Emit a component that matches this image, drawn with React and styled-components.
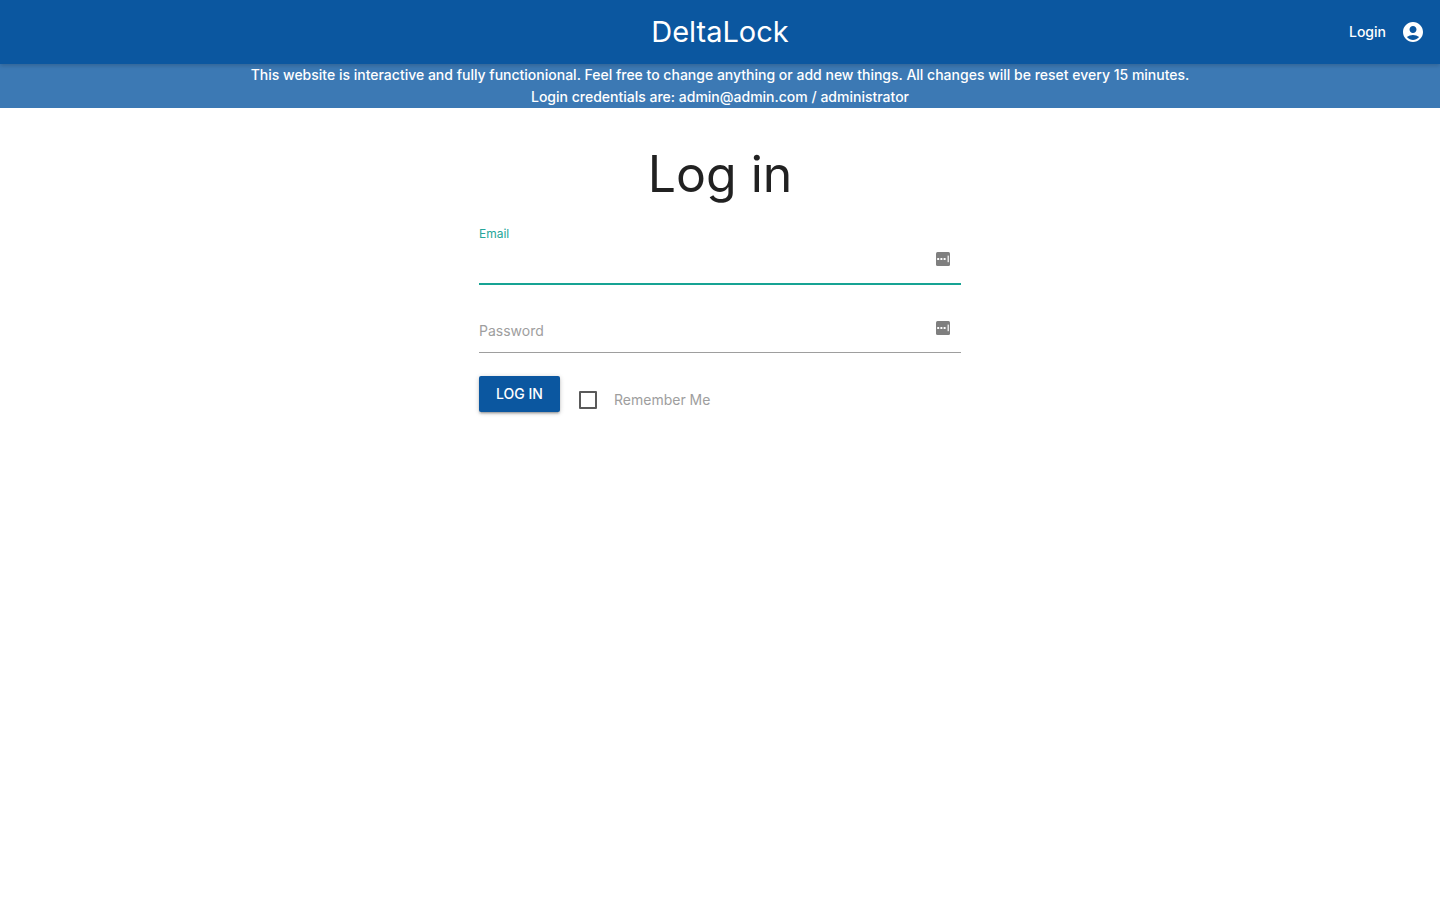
import React from "react";
import styled, { createGlobalStyle } from "styled-components";
import { MdAccountCircle } from "react-icons/md";

const Global = createGlobalStyle`
  *, *::before, *::after { box-sizing: border-box; }
  body {
    margin: 0;
    background: #fff;
    color: rgba(0, 0, 0, 0.87);
    font-family: Inter, "Liberation Sans", sans-serif;
    font-size: 14px;
    line-height: 22px;
  }
`;

const Nav = styled.nav`
  display: grid;
  grid-template-columns: 1fr auto 1fr;
  align-items: center;
  min-height: 64px;
  padding: 0 15px;
  background: #0b57a0;
  color: #fff;
  position: relative;
  box-shadow: 0 2px 4px 0 rgba(0, 0, 0, 0.16);
`;

const Brand = styled.a`
  grid-column: 2;
  color: inherit;
  text-decoration: none;
  font-size: 29px;
  line-height: 64px;
`;

const LoginLink = styled.a`
  grid-column: 3;
  justify-self: end;
  display: flex;
  align-items: center;
  gap: 15px;
  color: inherit;
  text-decoration: none;
  font-weight: 500;
`;

const Notice = styled.div`
  background: #3c79b4;
  color: #fff;
  text-align: center;
  font-weight: 500;
`;

const NoticeLine = styled.p`
  margin: 0;
`;

const Main = styled.main`
  width: 34%;
  min-width: 300px;
  max-width: 482px;
  margin: 0 auto;
  padding-bottom: 24px;
`;

const Title = styled.h1`
  margin: 37px 0 26px;
  font-size: 50px;
  line-height: 58px;
  font-weight: 400;
  text-align: center;
`;

const Form = styled.form`
  display: flex;
  flex-direction: column;
  gap: 23px;
`;

const Field = styled.div`
  display: grid;
  grid-template-rows: ${(p) => (p.$active ? "10px 46px" : "45px")};
`;

const Label = styled.label`
  grid-area: 1 / 1;
  align-self: center;
  justify-self: start;
  color: ${(p) => (p.$active ? "#26a69a" : "#9e9e9e")};
  font-size: ${(p) => (p.$active ? "12px" : "14px")};
  line-height: 14px;
`;

const Input = styled.input`
  grid-area: -2 / 1;
  width: 100%;
  padding: 0 32px 0 0;
  border: 0;
  border-bottom: ${(p) => (p.$active ? "2px solid #16a394" : "1px solid #9e9e9e")};
  outline: none;
  background: transparent;
  color: inherit;
  font: inherit;
`;

const FillIcon = styled.svg`
  grid-area: -2 / 1;
  justify-self: end;
  margin: 13px 11px 0 0;
  pointer-events: none;
`;

const Actions = styled.div`
  display: flex;
  align-items: flex-end;
  gap: 19px;
`;

const SubmitButton = styled.button`
  min-width: 81px;
  height: 36px;
  padding: 0 15px;
  border: 0;
  border-radius: 2px;
  background: #0b57a0;
  color: #fff;
  font: inherit;
  font-weight: 500;
  white-space: nowrap;
  cursor: pointer;
  box-shadow: 0 2px 2px 0 rgba(0, 0, 0, 0.14), 0 3px 1px -2px rgba(0, 0, 0, 0.12), 0 1px 5px 0 rgba(0, 0, 0, 0.2);
`;

const Remember = styled.label`
  display: flex;
  align-items: center;
  gap: 17px;
  color: #9e9e9e;
  line-height: 24px;
`;

const Checkbox = styled.input`
  appearance: none;
  width: 18px;
  height: 18px;
  margin: 0;
  border: 2px solid #5a5a5a;
  border-radius: 1px;
  &:checked { background: #26a69a; }
`;

function Autofill() {
  return (
    <FillIcon width="14" height="14" viewBox="0 0 14 14" aria-hidden="true">
      <rect width="14" height="14" rx="1.5" fill="#7f7f7f" />
      <g fill="#fff">
        <rect x="1.2" y="6" width="2" height="2" rx="0.3" />
        <rect x="4.4" y="6" width="2" height="2" rx="0.3" />
        <rect x="7.6" y="6" width="2" height="2" rx="0.3" />
        <rect x="11.6" y="3.6" width="1.2" height="6.6" />
      </g>
    </FillIcon>
  );
}

function TextField({ id, label, type, active }) {
  return (
    <Field $active={active}>
      <Label $active={active} htmlFor={id}>{label}</Label>
      <Input $active={active} id={id} type={type} />
      <Autofill />
    </Field>
  );
}

export default function App() {
  return (
    <>
      <Global />
      <Nav>
        <Brand href="#">DeltaLock</Brand>
        <LoginLink href="#">
          Login
          <MdAccountCircle size={24} aria-hidden="true" />
        </LoginLink>
      </Nav>
      <Notice>
        <NoticeLine>
          This website is interactive and fully functionional. Feel free to change anything or add new things. All changes will be reset every 15 minutes.
        </NoticeLine>
        <NoticeLine>Login credentials are: admin@admin.com / administrator</NoticeLine>
      </Notice>
      <Main>
        <Title>Log in</Title>
        <Form onSubmit={(e) => e.preventDefault()}>
          <TextField id="email" label="Email" type="email" active />
          <TextField id="password" label="Password" type="password" />
          <Actions>
            <SubmitButton type="submit">LOG IN</SubmitButton>
            <Remember>
              <Checkbox type="checkbox" />
              Remember Me
            </Remember>
          </Actions>
        </Form>
      </Main>
    </>
  );
}
